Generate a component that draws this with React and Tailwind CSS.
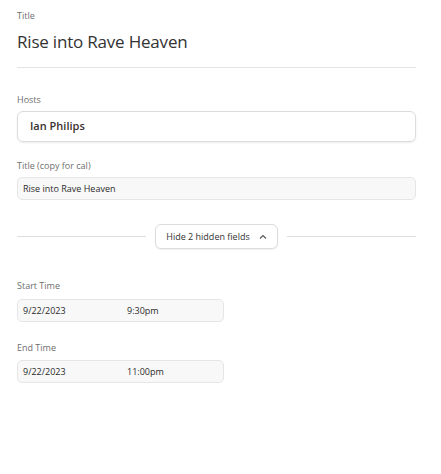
import React from 'react';

const font = { fontFamily: '"Open Sans", "Noto Sans", sans-serif' };

function Label({ children, className = '' }) {
  return <div className={`text-[9px] leading-[12px] text-[#6e6e6e] ${className}`}>{children}</div>;
}

function GrayField({ children, className = '' }) {
  return (
    <div className={`h-[23px] flex items-center px-[5px] rounded-[5px] border border-[#e6e6e6] bg-[#f8f8f8] text-[9px] text-[#2b2b2b] ${className}`}>
      {children}
    </div>
  );
}

export default function App() {
  return (
    <div className="min-h-screen bg-white pl-[17px] pr-[25px] pt-[10px]" style={font}>
      {/* Title */}
      <Label>Title</Label>
      <div className="mt-[8px] text-[17px] leading-[24px] text-[#333] tracking-[-0.2px]">Rise into Rave Heaven</div>
      <div className="mt-[13px] h-px bg-[#e3e3e3]" />

      {/* Hosts */}
      <Label className="mt-[26px]">Hosts</Label>
      <div className="mt-[5px] h-[31px] flex items-center px-[12px] rounded-[6px] border border-[#dcdcdc] shadow-[0_1px_2px_rgba(0,0,0,0.08)] text-[11px] font-semibold text-[#3a2f2f]">
        Ian Philips
      </div>

      {/* Title copy */}
      <Label className="mt-[18px]">Title (copy for cal)</Label>
      <GrayField className="mt-[5px]">Rise into Rave Heaven</GrayField>

      {/* Hidden fields toggle */}
      <div className="mt-[24px] flex items-center gap-[9px]">
        <div className="flex-1 h-px bg-[#dedede]" />
        <button className="h-[25px] px-[10px] flex items-center gap-[9px] rounded-[6px] border border-[#dcdcdc] bg-white shadow-[0_1px_2px_rgba(0,0,0,0.06)] text-[9px] text-[#333]">
          <span>Hide 2 hidden fields</span>
          <svg width="8" height="6" viewBox="0 0 8 6" fill="none" stroke="#555" strokeWidth="1.1">
            <path d="M1 4.5 L4 1.5 L7 4.5" />
          </svg>
        </button>
        <div className="flex-1 h-px bg-[#dedede]" />
      </div>

      {/* Start Time */}
      <Label className="mt-[31px]">Start Time</Label>
      <GrayField className="mt-[7px] w-[207px]">
        <span className="w-[104px]">9/22/2023</span>
        <span>9:30pm</span>
      </GrayField>

      {/* End Time */}
      <Label className="mt-[20px]">End Time</Label>
      <GrayField className="mt-[6px] w-[207px]">
        <span className="w-[104px]">9/22/2023</span>
        <span>11:00pm</span>
      </GrayField>
    </div>
  );
}
